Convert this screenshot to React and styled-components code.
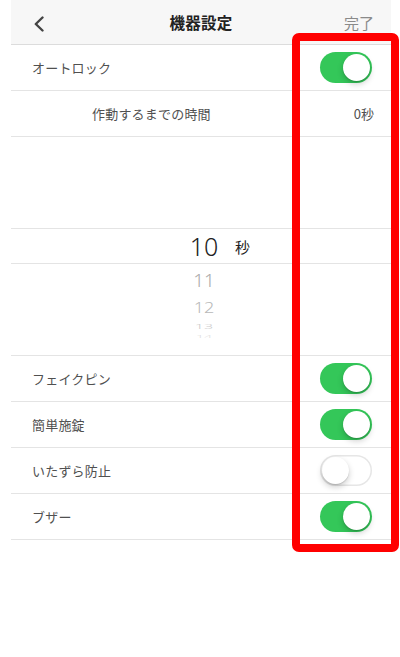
import styled, { createGlobalStyle } from 'styled-components'

const GlobalStyle = createGlobalStyle`
  html, body {
    margin: 0;
    padding: 0;
    background: #fff;
  }
  body {
    font-family: 'Noto Sans CJK JP', 'Noto Sans', sans-serif;
    -webkit-font-smoothing: antialiased;
  }
`

const wheel = [
  { value: '11', size: 19, height: 32, scale: 0.95, color: '#a9a9a9' },
  { value: '12', size: 18, height: 22, scale: 0.8, color: '#b8b8b8' },
  { value: '13', size: 16, height: 16, scale: 0.5, color: '#cccccc' },
  { value: '14', size: 14, height: 6, scale: 0.25, color: '#e0e0e0' },
]

const toggles = [
  { label: 'フェイクピン', on: true },
  { label: '簡単施錠', on: true },
  { label: 'いたずら防止', on: false },
  { label: 'ブザー', on: true },
]

const Switch = ({ on }) => (
  <Track $on={on}>
    <Knob />
  </Track>
)

const App = () => {
  return (
    <Page>
      <GlobalStyle />
      <Screen>
        <Header>
          <Back>
            <svg width='12' height='16' viewBox='0 0 12 16'>
              <path d='M9.5 1.5 L2.8 8 L9.5 14.5' fill='none' stroke='#444' strokeWidth='2.4' strokeLinecap='round' strokeLinejoin='round' />
            </svg>
          </Back>
          <Title>機器設定</Title>
          <Done>完了</Done>
        </Header>

        <Row>
          <Label>オートロック</Label>
          <Switch on />
        </Row>
        <Row $indent>
          <Label>作動するまでの時間</Label>
          <Value>0秒</Value>
        </Row>

        <Picker>
          <PickerTop />
          <PickerBand>
            <Num $size={25} $color='#222'>10</Num>
            <Unit>秒</Unit>
          </PickerBand>
          <PickerRest>
            {wheel.map((w) => (
              <WheelItem key={w.value} $height={w.height}>
                <Num $size={w.size} $color={w.color} $scale={w.scale}>
                  {w.value}
                </Num>
              </WheelItem>
            ))}
          </PickerRest>
        </Picker>

        {toggles.map((t) => (
          <Row key={t.label}>
            <Label>{t.label}</Label>
            <Switch on={t.on} />
          </Row>
        ))}
      </Screen>
      <Highlight />
    </Page>
  )
}

const Page = styled.div`
  position: relative;
  width: 400px;
  height: 657px;
  background: #fff;
`

const Screen = styled.div`
  margin-left: 11px;
  width: 380px;
`

const Header = styled.header`
  height: 44px;
  background: #f7f7f7;
  border-bottom: 1px solid #dcdcdc;
  display: grid;
  grid-template-columns: 80px 1fr 80px;
  align-items: center;
`

const Back = styled.div`
  display: flex;
  align-items: center;
  padding: 3px 0 0 22px;
  svg {
    display: block;
  }
`

const Title = styled.h1`
  margin: 0;
  text-align: center;
  font-size: 15.5px;
  font-weight: 700;
  color: #222;
  letter-spacing: 0.3px;
`

const Done = styled.div`
  text-align: right;
  padding-right: 17px;
  font-size: 15px;
  color: #8a8a8a;
`

const Row = styled.div`
  height: 45px;
  border-bottom: 1px solid #e4e4e4;
  display: flex;
  align-items: center;
  justify-content: space-between;
  padding: 0 ${(p) => (p.$indent ? '17px' : '19px')} 0 ${(p) => (p.$indent ? '81px' : '21px')};
`

const Label = styled.span`
  font-size: 13px;
  color: #505050;
  letter-spacing: 0.2px;
`

const Value = styled.span`
  font-size: 13px;
  color: #505050;
`

const Track = styled.div`
  box-sizing: border-box;
  width: 52px;
  height: 31px;
  border-radius: 16px;
  padding: 2px;
  display: flex;
  justify-content: ${(p) => (p.$on ? 'flex-end' : 'flex-start')};
  align-items: center;
  background: ${(p) => (p.$on ? '#34c759' : '#fff')};
  box-shadow: ${(p) => (p.$on ? 'none' : 'inset 0 0 0 1.5px #e6e6e6')};
`

const Knob = styled.div`
  width: 27px;
  height: 27px;
  border-radius: 50%;
  background: #fff;
  box-shadow: 0 3px 6px rgba(0, 0, 0, 0.2), 0 1px 1px rgba(0, 0, 0, 0.14);
`

const Picker = styled.div`
  height: 218px;
  border-bottom: 1px solid #e4e4e4;
  display: flex;
  flex-direction: column;
`

const PickerTop = styled.div`
  height: 91px;
  border-bottom: 1px solid #e4e4e4;
`

const PickerBand = styled.div`
  height: 34px;
  border-bottom: 1px solid #e4e4e4;
  display: flex;
  align-items: center;
  padding-left: 171px;
`

const PickerRest = styled.div`
  display: flex;
  flex-direction: column;
  padding-left: 171px;
`

const WheelItem = styled.div`
  height: ${(p) => p.$height}px;
  display: flex;
  align-items: center;
  overflow: visible;
`

const Num = styled.span`
  width: 44px;
  text-align: center;
  font-family: 'Noto Sans', 'Liberation Sans', sans-serif;
  font-weight: 300;
  font-size: ${(p) => p.$size}px;
  line-height: 1;
  color: ${(p) => p.$color};
  transform: scaleY(${(p) => p.$scale || 1});
`

const Unit = styled.span`
  margin-left: 9px;
  font-size: 15px;
  color: #222;
`

const Highlight = styled.div`
  position: absolute;
  left: 292px;
  top: 33px;
  width: 107px;
  height: 519px;
  box-sizing: border-box;
  border: 8px solid #ff0000;
  border-radius: 7px;
  pointer-events: none;
`

export default App
